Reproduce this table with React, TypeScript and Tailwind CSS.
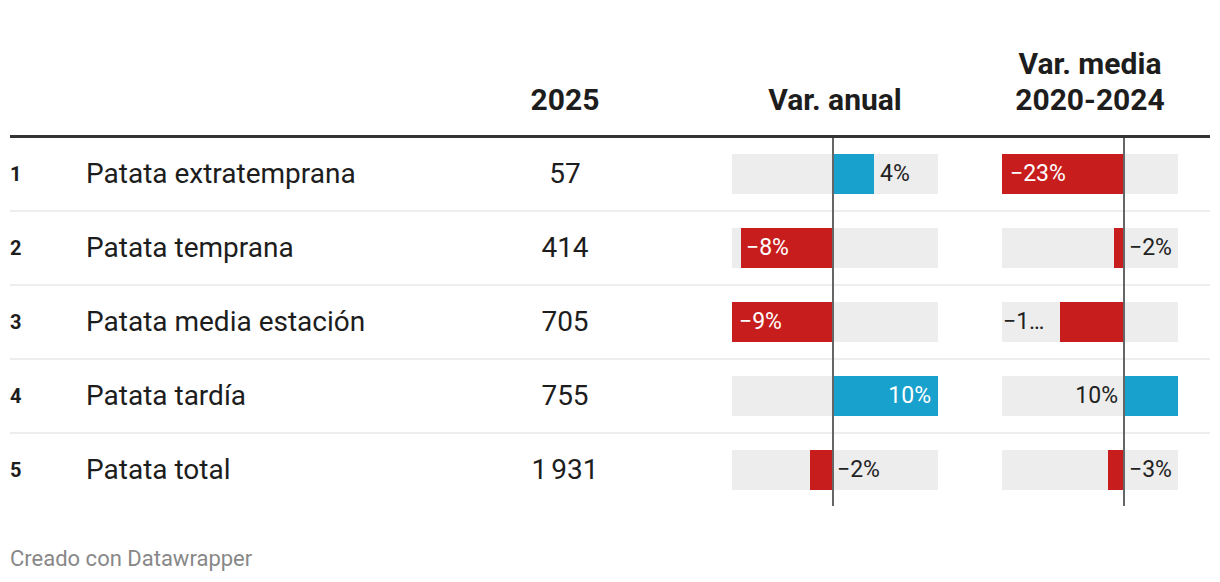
import React from 'react';

type Bar = { left: number; width: number; color: 'blue' | 'red'; label: string; labelPos: { left?: number; right?: number; maxWidth?: number }; light: boolean };

interface Row {
    rank: number;
    name: string;
    value: React.ReactNode;
    anual: Bar;
    media: Bar;
}

const rows: Row[] = [
    {
        rank: 1,
        name: 'Patata extratemprana',
        value: '57',
        anual: { left: 100, width: 42, color: 'blue', label: '4%', labelPos: { left: 148 }, light: false },
        media: { left: 0, width: 122, color: 'red', label: '−23%', labelPos: { left: 8 }, light: true },
    },
    {
        rank: 2,
        name: 'Patata temprana',
        value: '414',
        anual: { left: 9, width: 92, color: 'red', label: '−8%', labelPos: { left: 14 }, light: true },
        media: { left: 112, width: 10, color: 'red', label: '−2%', labelPos: { left: 127 }, light: false },
    },
    {
        rank: 3,
        name: 'Patata media estación',
        value: '705',
        anual: { left: 0, width: 101, color: 'red', label: '−9%', labelPos: { left: 7 }, light: true },
        media: { left: 58, width: 64, color: 'red', label: '−1…', labelPos: { left: 1, maxWidth: 54 }, light: false },
    },
    {
        rank: 4,
        name: 'Patata tardía',
        value: '755',
        anual: { left: 100, width: 106, color: 'blue', label: '10%', labelPos: { right: 7 }, light: true },
        media: { left: 122, width: 54, color: 'blue', label: '10%', labelPos: { right: 60 }, light: false },
    },
    {
        rank: 5,
        name: 'Patata total',
        value: (
            <>
                1<span className="inline-block w-[4px]" />931
            </>
        ),
        anual: { left: 78, width: 23, color: 'red', label: '−2%', labelPos: { left: 105 }, light: false },
        media: { left: 106, width: 16, color: 'red', label: '−3%', labelPos: { left: 127 }, light: false },
    },
];

// one bar chart cell; zero line runs the full row height and over the row border
const BarCell: React.FC<{ bar: Bar; className: string; zero: string; last: boolean }> = ({ bar, className, zero, last }) => (
    <div className={`relative flex items-center self-stretch ${className}`}>
        <div className="relative h-10 w-full bg-[#ededed]">
            <div
                className={`absolute top-0 h-10 ${bar.color === 'blue' ? 'bg-[#18a1cd]' : 'bg-[#c71e1d]'}`}
                style={{ left: bar.left, width: bar.width }}
            />
            <span
                className={`absolute top-0 h-10 overflow-hidden whitespace-nowrap text-[23px] leading-[40px] ${bar.light ? 'text-white' : 'text-[#222]'}`}
                style={{ left: bar.labelPos.left, right: bar.labelPos.right, maxWidth: bar.labelPos.maxWidth }}
            >
                {bar.label}
            </span>
        </div>
        <div className={`absolute top-0 w-[2px] bg-[#666] ${zero} ${last ? 'bottom-0' : '-bottom-[2px]'}`} />
    </div>
);

export default function App() {
    return (
        <div className="w-[1220px] bg-white px-[10px] pt-[46px] text-[#1d1d1d] font-['Roboto','Liberation_Sans',sans-serif]">
            <div className="flex items-end border-b-[3px] border-[#333] pb-[17px] text-[30px] font-bold leading-[36px]">
                <div className="w-[480px]" />
                <div className="w-[150px] text-center">2025</div>
                <div className="ml-[92px] w-[206px] text-center">Var. anual</div>
                <div className="ml-[64px] w-[176px] text-center">
                    Var. media
                    <br />
                    2020-2024
                </div>
            </div>
            {rows.map((row, i) => {
                const last = i === rows.length - 1;
                return (
                    <div
                        key={row.rank}
                        className={`flex items-center ${last ? 'h-[72px]' : 'h-[74px] border-b-2 border-[#eeeeee]'}`}
                    >
                        <div className="w-[76px] text-[20px] font-bold">{row.rank}</div>
                        <div className="w-[404px] text-[28px]">{row.name}</div>
                        <div className="w-[150px] text-center text-[28px]">{row.value}</div>
                        <BarCell bar={row.anual} className="ml-[92px] w-[206px]" zero="left-[100px]" last={last} />
                        <BarCell bar={row.media} className="ml-[64px] w-[176px]" zero="left-[121px]" last={last} />
                    </div>
                );
            })}
            <div className="mt-[38px] text-[22px] leading-[30px] text-[#888]">Creado con Datawrapper</div>
        </div>
    );
}
